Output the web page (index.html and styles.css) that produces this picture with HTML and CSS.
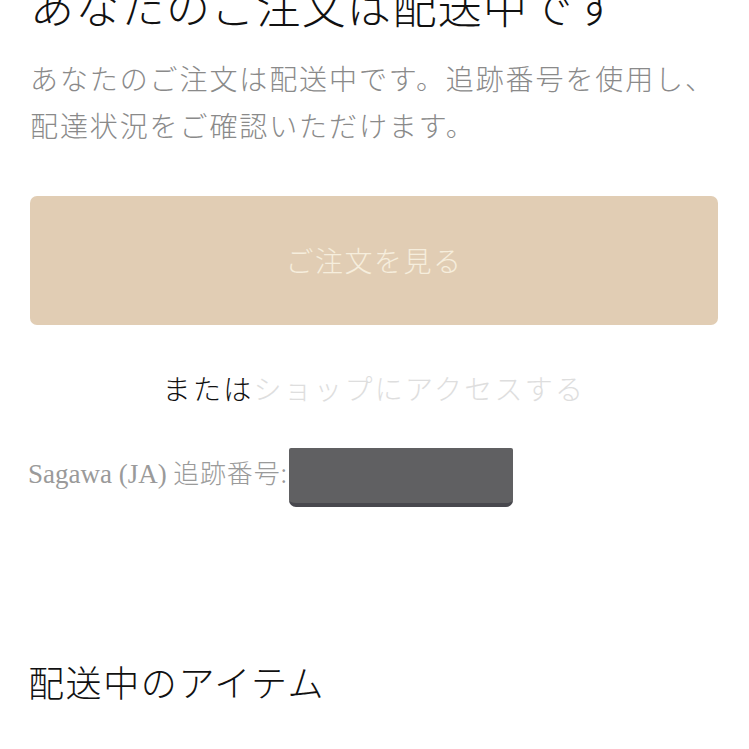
FILE: index.html
```html
<!DOCTYPE html>
<html lang="ja">
<head>
<meta charset="utf-8">
<link rel="stylesheet" href="styles.css">
</head>
<body>
<main class="page">
  <h1 class="title">あなたのご注文は配送中です</h1>
  <p class="lead">あなたのご注文は配送中です。追跡番号を使用し、<br>配達状況をご確認いただけます。</p>
  <a class="btn">ご注文を見る</a>
  <p class="alt"><span class="alt-or">または</span><a class="alt-link">ショップにアクセスする</a></p>
  <div class="tracking">
    <span class="tracking-label"><span class="latin">Sagawa (JA)</span> 追跡番号:</span>
    <span class="redact"></span>
  </div>
  <h2 class="items-title">配送中のアイテム</h2>
</main>
</body>
</html>
```
FILE: styles.css
```css
html, body {
  margin: 0;
  padding: 0;
  background: #ffffff;
  overflow: hidden;
}
body {
  font-family: "Noto Sans CJK JP", "Noto Sans", sans-serif;
  font-weight: 300;
}
.page {
  display: flex;
  flex-direction: column;
  padding: 0 31px 0 30px;
}
.title {
  margin: -21px 0 0 0;
  font-size: 44px;
  line-height: 53px;
  font-weight: 300;
  color: #111111;
  letter-spacing: 1.3px;
  white-space: nowrap;
}
.lead {
  margin: 23px 0 0 0;
  font-size: 28px;
  line-height: 47px;
  color: #8a8a8a;
  letter-spacing: 1.9px;
  white-space: nowrap;
}
.btn {
  margin-top: 47px;
  height: 129px;
  border-radius: 7px;
  background: #e1cdb4;
  display: flex;
  align-items: center;
  justify-content: center;
  color: #f6eedd;
  font-size: 28px;
  letter-spacing: 1.5px;
  padding-bottom: 2px;
  box-sizing: border-box;
}
.alt {
  margin: 43px 0 0 0;
  text-align: center;
  font-size: 28px;
  line-height: 40px;
  letter-spacing: 2.3px;
}
.alt-or {
  color: #111111;
}
.alt-link {
  color: #dedede;
}
.tracking {
  margin-top: 40px;
  display: flex;
  align-items: center;
}
.tracking-label {
  font-size: 26px;
  color: #9a9a9a;
  padding-bottom: 12px;
  margin-left: -2px;
  letter-spacing: 0.8px;
  white-space: nowrap;
}
.latin {
  font-family: "Liberation Serif", serif;
  font-size: 27px;
  letter-spacing: 0;
}
.redact {
  margin-left: 1px;
  width: 224px;
  height: 59px;
  box-sizing: border-box;
  background: #606062;
  border-bottom: 4px solid #48484e;
  border-radius: 2px 2px 7px 7px;
}
.items-title {
  margin: 151px 0 0 -2px;
  font-size: 36px;
  line-height: 47px;
  font-weight: 300;
  color: #111111;
  letter-spacing: 1.6px;
}
```
